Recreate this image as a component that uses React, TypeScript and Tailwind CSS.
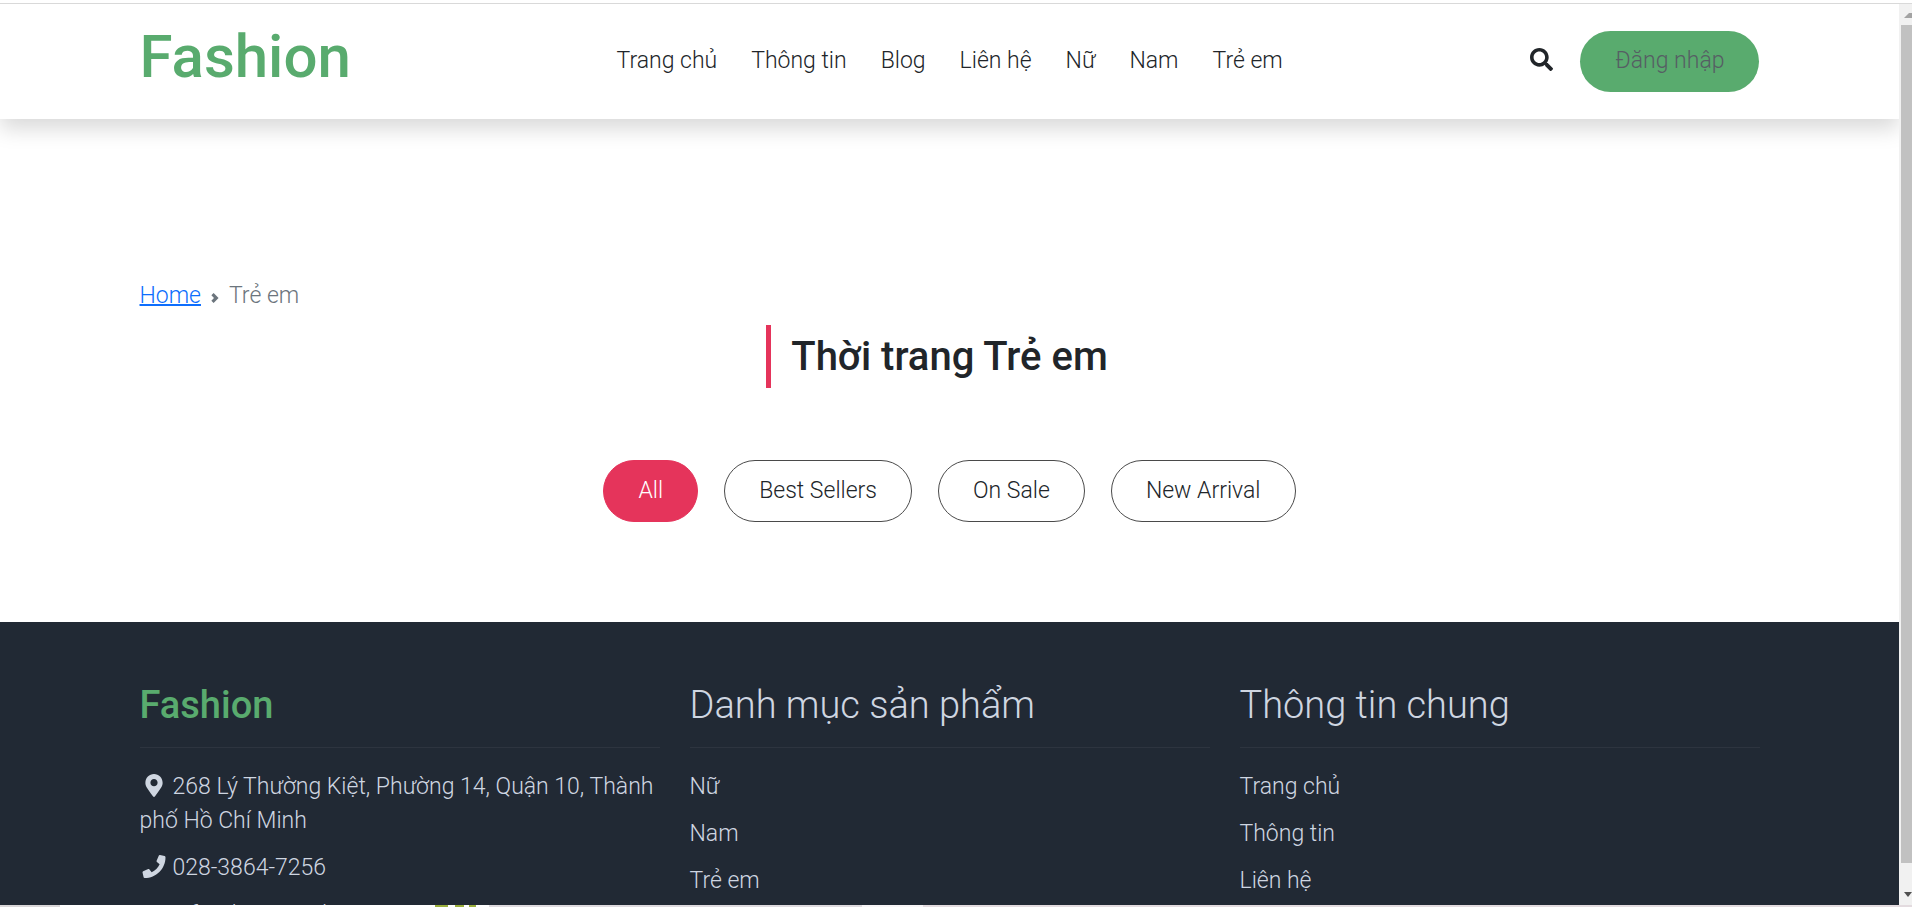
import { FaSearch, FaMapMarkerAlt, FaPhone, FaEnvelope } from "react-icons/fa";

const navLinks = ["Trang chủ", "Thông tin", "Blog", "Liên hệ", "Nữ", "Nam", "Trẻ em"];
const filters = ["All", "Best Sellers", "On Sale", "New Arrival"];
const columns = [
  { title: "Danh mục sản phẩm", links: ["Nữ", "Nam", "Trẻ em"] },
  { title: "Thông tin chung", links: ["Trang chủ", "Thông tin", "Liên hệ"] },
];

function Header() {
  return (
    <header className="relative z-10 shrink-0 bg-white shadow-[0_10px_20px_rgba(0,0,0,0.15)]">
      <div className="mx-auto flex h-[115px] w-full max-w-[1650px] items-start justify-between px-[15px] pt-[6px]">
        <a href="#" className="text-[60px] leading-[94px] font-medium text-[#59ab6e]">
          Fashion
        </a>
        <nav aria-label="Main" className="mt-[34px] ml-[18px] flex gap-[34px]">
          {navLinks.map((label) => (
            <a key={label} href="#" className="leading-[34px]">
              {label}
            </a>
          ))}
        </nav>
        <div className="mt-[21px] flex items-center gap-[27px]">
          <button type="button" aria-label="Search" className="pb-[4px] text-[#212529]">
            <FaSearch className="size-[23px]" />
          </button>
          <button type="button" className="h-[61px] rounded-full bg-[#59ab6e] px-[35px] text-[#565e64]">
            Đăng nhập
          </button>
        </div>
      </div>
    </header>
  );
}

function Footer() {
  return (
    <footer className="grow bg-[#212934] text-[#cfd6e1]">
      <div className="mx-auto grid w-full max-w-[1650px] grid-cols-3 pt-[60px]">
        <section className="px-[15px]">
          <h2 className="h-[66px] border-b border-[#2d343f] text-[38px] leading-[46px] font-medium text-[#59ab6e]">Fashion</h2>
          <ul className="mt-[22px] flex flex-col gap-[13px] leading-[34px]">
            <li>
              <FaMapMarkerAlt className="mr-[5px] -mt-1 inline h-[23px] w-[28px]" />
              268 Lý Thường Kiệt, Phường 14, Quận 10, Thành phố Hồ Chí Minh
            </li>
            <li>
              <FaPhone className="mr-[5px] -mt-1 inline h-[23px] w-[28px]" />
              <a href="tel:028-3864-7256">028-3864-7256</a>
            </li>
            <li>
              <FaEnvelope className="mr-[5px] -mt-1 inline h-[23px] w-[28px]" />
              <a href="mailto:info@hcmut.edu.vn">info@hcmut.edu.vn</a>
            </li>
          </ul>
        </section>
        {columns.map((column) => (
          <section key={column.title} className="px-[15px]">
            <h2 className="h-[66px] border-b border-[#2d343f] text-[38px] leading-[46px]">{column.title}</h2>
            <ul className="mt-[22px] flex flex-col gap-[13px] leading-[34px]">
              {column.links.map((label) => (
                <li key={label}>
                  <a href="#">{label}</a>
                </li>
              ))}
            </ul>
          </section>
        ))}
      </div>
    </footer>
  );
}

function ScrollBar() {
  return (
    <div aria-hidden="true" className="flex w-[13px] shrink-0 flex-col items-end overflow-hidden bg-[#f1f1f1]">
      <svg viewBox="0 0 8 21" className="h-[21px] w-[8px] shrink-0">
        <path d="M0 14h8V9H5z" fill="#a3a3a3" />
      </svg>
      <div className="w-[11px] grow bg-[#c1c1c1]" />
      <svg viewBox="0 0 8 42" className="h-[42px] w-[8px] shrink-0">
        <path d="M0 29h8l-4 5z" fill="#505050" />
      </svg>
    </div>
  );
}

function BottomStrip() {
  return (
    <div aria-hidden="true" className="flex h-[2px] shrink-0 bg-[#e3dbdf]">
      <div className="w-[60px] bg-[#d9d6d8]" />
      <div className="w-[375px] bg-white" />
      <div className="w-[13px] bg-[#9aae3c]" />
      <div className="w-[7px] bg-white" />
      <div className="w-[9px] bg-[#9aae3c]" />
      <div className="w-[5px] bg-white" />
      <div className="w-[7px] bg-[#9aae3c]" />
      <div className="w-[13px] bg-white" />
      <div className="w-[373px] bg-[#dedade]" />
      <div className="w-[61px] bg-[#f7f5f7]" />
    </div>
  );
}

export default function App() {
  return (
    <div className="flex h-screen flex-col overflow-hidden bg-white font-['Roboto',sans-serif] text-[23px] font-light text-[#212529]">
      <div className="h-[4px] shrink-0 border-b border-[#d9d9d9]" />
      <div className="flex min-h-0 grow">
        <div className="flex min-w-0 grow flex-col overflow-hidden">
          <Header />
          <main className="mx-auto w-full max-w-[1650px] shrink-0 px-[15px] pt-[160px] pb-[100px]">
            <nav aria-label="Breadcrumb" className="flex items-center leading-[34px]">
              <a href="#" className="text-[#0d6efd] underline decoration-2">
                Home
              </a>
              <svg viewBox="0 0 8 10" aria-hidden="true" className="mx-[10px] mt-1 h-[10px] w-[8px]">
                <path d="M1.5 1.2L5.3 5 1.5 8.8" fill="none" stroke="#6c757d" strokeWidth="3.2" />
              </svg>
              <span className="text-[#6c757d]">Trẻ em</span>
            </nav>
            <div className="mt-[12px] flex justify-center">
              <h1 className="border-l-[5px] border-[#e5345b] pr-[25px] pl-[20px] text-[40px] leading-[63px] font-medium">Thời trang Trẻ em</h1>
            </div>
            <div className="mt-[72px] flex justify-center gap-[26px]">
              {filters.map((label, index) => (
                <button
                  key={label}
                  type="button"
                  className={
                    index === 0
                      ? "h-[62px] rounded-full border border-[#e5345b] bg-[#e5345b] px-[34px] text-white"
                      : "h-[62px] rounded-full border border-[#4a4a4a] px-[34px]"
                  }
                >
                  {label}
                </button>
              ))}
            </div>
          </main>
          <Footer />
        </div>
        <ScrollBar />
      </div>
      <BottomStrip />
    </div>
  );
}
